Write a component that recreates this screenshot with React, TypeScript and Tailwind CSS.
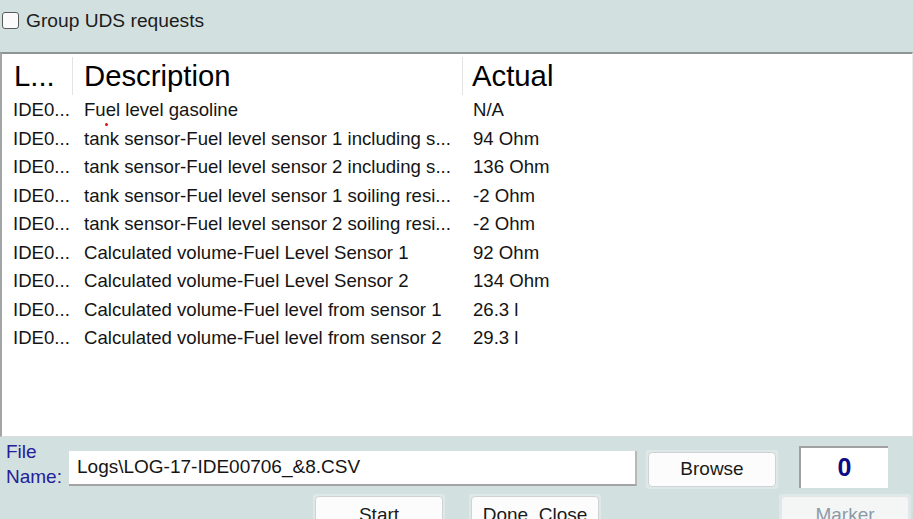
const rows = [
  ['IDE0...', 'Fuel level gasoline', 'N/A'],
  ['IDE0...', 'tank sensor-Fuel level sensor 1 including s...', '94 Ohm'],
  ['IDE0...', 'tank sensor-Fuel level sensor 2 including s...', '136 Ohm'],
  ['IDE0...', 'tank sensor-Fuel level sensor 1 soiling resi...', '-2 Ohm'],
  ['IDE0...', 'tank sensor-Fuel level sensor 2 soiling resi...', '-2 Ohm'],
  ['IDE0...', 'Calculated volume-Fuel Level Sensor 1', '92 Ohm'],
  ['IDE0...', 'Calculated volume-Fuel Level Sensor 2', '134 Ohm'],
  ['IDE0...', 'Calculated volume-Fuel level from sensor 1', '26.3 l'],
  ['IDE0...', 'Calculated volume-Fuel level from sensor 2', '29.3 l'],
];

function WinButton({ label, disabled = false }: { label: string; disabled?: boolean }) {
  return (
    <div className="p-[2px] bg-[#dfe8e8] rounded-[3px]">
      <div
        className={`flex h-[36px] w-[128px] items-start justify-center rounded-[4px] border pt-[6px] text-[19px] leading-[24px] ${
          disabled
            ? 'border-[#e2e6e6] bg-[#f4f6f6] text-[#8d9aa6]'
            : 'border-[#cfd3d3] bg-[#fcfcfc] text-[#1a1a1a]'
        }`}
      >
        {label}
      </div>
    </div>
  );
}

export default function App() {
  return (
    <div className="h-[519px] w-[913px] overflow-hidden bg-[#d3e0e0] font-['Liberation_Sans',Arial,sans-serif]">
      {/* Checkbox bar */}
      <div className="flex h-[52px] items-start gap-[7px] pl-[2px] pt-[12px]">
        <div className="h-[17px] w-[17px] rounded-[3px] border border-[#5a5a5a] bg-[#fbfbfb]" />
        <span className="text-[19.2px] leading-[18px] text-[#1c1c1c]">Group UDS requests</span>
      </div>

      {/* List panel */}
      <div className="relative h-[385px] border-l-2 border-t-2 border-b border-r border-l-[#a2a6a6] border-t-[#8e9494] border-b-[#dcdcdc] border-r-[#ececec] bg-white">
        <div className="flex h-[42px] items-center pt-[2px] text-[29.3px] text-black">
          <div className="flex h-[38px] w-[71px] items-center border-r border-[#e4e4e4] pl-[12px]">L...</div>
          <div className="flex h-[38px] w-[390px] items-center border-r border-[#e4e4e4] pl-[11px]">Description</div>
          <div className="pl-[9px]">Actual</div>
        </div>
        {rows.map((r, i) => (
          <div key={i} className="flex h-[28.5px] items-center text-[18.6px] text-[#141414]">
            <div className="w-[71px] pl-[11px]">{r[0]}</div>
            <div className="w-[390px] pl-[11px]">{r[1]}</div>
            <div className="pl-[10px]">{r[2]}</div>
          </div>
        ))}
        <div className="absolute left-[103px] top-[69px] h-[3px] w-[3px] rounded-full bg-[#e01010]" />
      </div>

      {/* File controls */}
      <div className="flex items-start pl-[6px] pt-[2px]">
        <div className="w-[63px] text-[19px] leading-[25px] text-[#24209a]">
          File
          <br />
          Name:
        </div>
        <div className="mt-[12px] flex h-[35px] w-[568px] items-center border-b-2 border-r-2 border-b-[#a4a4a4] border-r-[#b8b8b8] bg-white pl-[8px] text-[19px] text-[#141414]">
          Logs\LOG-17-IDE00706_&amp;8.CSV
        </div>
        <div className="ml-[9px] mt-[11px] rounded-[3px] bg-[#dfe8e8] p-[2px]">
          <div className="flex h-[35px] w-[128px] items-center justify-center rounded-[4px] border border-[#cfd3d3] bg-[#fcfcfc] text-[19px] text-[#1a1a1a]">
            Browse
          </div>
        </div>
        <div className="ml-[21px] mt-[7px] flex h-[42px] w-[89px] items-center justify-center border-l-2 border-t-2 border-[#a0a0a0] bg-white text-[25px] font-bold text-[#0c0c84]">
          0
        </div>
      </div>
      <div className="flex items-start pt-[5px]">
        <div className="ml-[313px]">
          <WinButton label="Start" />
        </div>
        <div className="ml-[24px]">
          <WinButton label="Done_Close" />
        </div>
        <div className="ml-[178px]">
          <WinButton label="Marker" disabled />
        </div>
      </div>
    </div>
  );
}
